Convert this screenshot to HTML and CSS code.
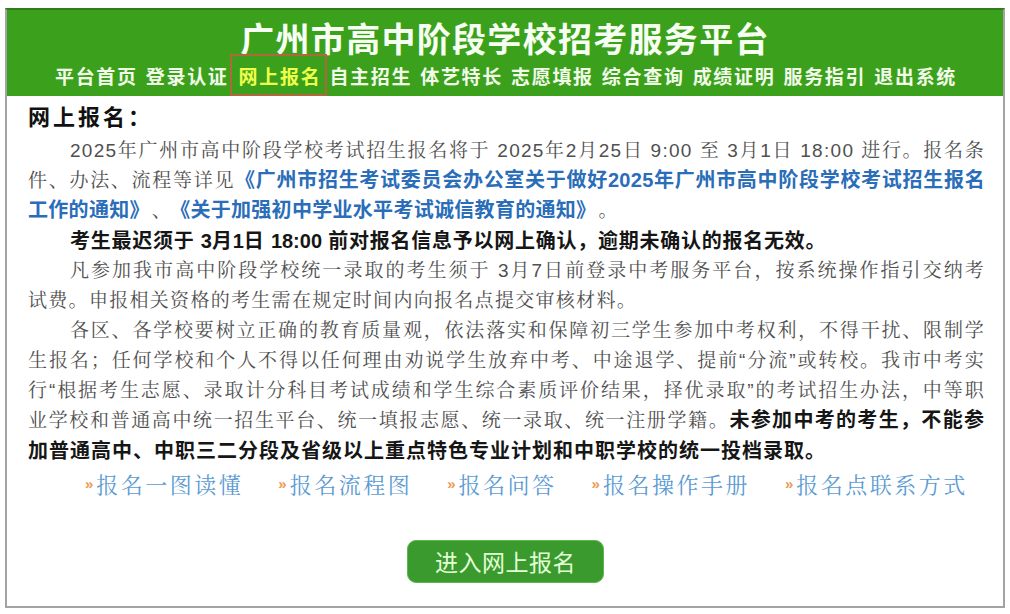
FILE: index.html
```html
<!DOCTYPE html>
<html lang="zh-CN">
<head>
<meta charset="utf-8">
<title>广州市高中阶段学校招考服务平台</title>
<link rel="stylesheet" href="styles.css">
</head>
<body>
<div class="frame">
  <header class="header">
    <h1 class="title">广州市高中阶段学校招考服务平台</h1>
    <nav class="nav">
      <a class="nav-item">平台首页</a>
      <a class="nav-item">登录认证</a>
      <a class="nav-item active">网上报名</a>
      <a class="nav-item">自主招生</a>
      <a class="nav-item">体艺特长</a>
      <a class="nav-item">志愿填报</a>
      <a class="nav-item">综合查询</a>
      <a class="nav-item">成绩证明</a>
      <a class="nav-item">服务指引</a>
      <a class="nav-item">退出系统</a>
    </nav>
  </header>
  <main class="content">
    <h2 class="heading">网上报名：</h2>
    <div class="para">
      <span class="ln first">2025年广州市高中阶段学校考试招生报名将于 2025年2月25日 9:00 至 3月1日 18:00 进行。报名条</span>
      <span class="ln">件、办法、流程等详见<a class="link">《广州市招生考试委员会办公室关于做好2025年广州市高中阶段学校考试招生报名</a></span>
      <span class="ln last"><a class="link">工作的通知》</a><span class="sep">、</span><a class="link">《关于加强初中学业水平考试诚信教育的通知》</a><span class="sep">。</span></span>
    </div>
    <div class="para">
      <span class="ln first last strong tight">考生最迟须于 <span class="num">3</span>月<span class="num">1</span>日 <span class="num">18:00</span> 前对报名信息予以网上确认，逾期未确认的报名无效。</span>
    </div>
    <div class="para">
      <span class="ln first">凡参加我市高中阶段学校统一录取的考生须于 3月7日前登录中考服务平台，按系统操作指引交纳考</span>
      <span class="ln last">试费。申报相关资格的考生需在规定时间内向报名点提交审核材料。</span>
    </div>
    <div class="para">
      <span class="ln first">各区、各学校要树立正确的教育质量观，依法落实和保障初三学生参加中考权利，不得干扰、限制学</span>
      <span class="ln">生报名；任何学校和个人不得以任何理由劝说学生放弃中考、中途退学、提前“分流”或转校。我市中考实</span>
      <span class="ln">行“根据考生志愿、录取计分科目考试成绩和学生综合素质评价结果，择优录取”的考试招生办法，中等职</span>
      <span class="ln">业学校和普通高中统一招生平台、统一填报志愿、统一录取、统一注册学籍。<b class="strong">未参加中考的考生，不能参</b></span>
      <span class="ln last strong">加普通高中、中职三二分段及省级以上重点特色专业计划和中职学校的统一投档录取。</span>
    </div>
    <div class="quick">
      <a class="quick-item"><span class="mark">»</span>报名一图读懂</a>
      <a class="quick-item"><span class="mark">»</span>报名流程图</a>
      <a class="quick-item"><span class="mark">»</span>报名问答</a>
      <a class="quick-item"><span class="mark">»</span>报名操作手册</a>
      <a class="quick-item"><span class="mark">»</span>报名点联系方式</a>
    </div>
    <div class="actions">
      <a class="btn">进入网上报名</a>
    </div>
  </main>
</div>
</body>
</html>
```

FILE: styles.css
```css
* { box-sizing: border-box; }
html, body { margin: 0; padding: 0; background: #ffffff; }
body {
  font-family: "Liberation Sans", "Noto Sans CJK SC", sans-serif;
}
.frame {
  width: 1000px;
  height: 600px;
  margin: 8px 0 0 5px;
  border: 2px solid #a3a3a3;
  border-top-color: #2f7d18;
  background: #ffffff;
}
.header {
  background: #3ba11d;
  height: 86px;
  padding-top: 8px;
  display: flex;
  flex-direction: column;
  align-items: center;
}
.title {
  margin: 0;
  height: 40px;
  line-height: 40px;
  font-size: 34px;
  letter-spacing: 1.3px;
  font-weight: 700;
  color: #f6fff2;
  font-family: "Noto Sans CJK SC", sans-serif;
}
.nav {
  margin-top: 6px;
  height: 24px;
  display: flex;
  align-items: center;
  justify-content: center;
  gap: 8px;
  padding-left: 2px;
}
.nav-item {
  font-family: "Noto Sans CJK SC", sans-serif;
  font-size: 19px;
  letter-spacing: 1.7px;
  font-weight: 700;
  line-height: 24px;
  color: #f2fbe8;
  white-space: nowrap;
}
.nav-item.active {
  color: #f0ff4a;
  border: 2px solid #b1673c;
  padding: 8px 4px 6px 7px;
  margin: -10px -6px -8px -7px;
}
.content {
  padding: 4px 18px 0 21px;
}
.heading {
  margin: 0 0 6px 0;
  font-family: "Noto Sans CJK SC", sans-serif;
  font-size: 22px;
  letter-spacing: 3px;
  line-height: 30px;
  font-weight: 700;
  color: #111111;
}
.para {
  font-family: "Liberation Sans", "Noto Serif CJK SC", "Noto Sans CJK SC", serif;
  font-size: 19px;
  letter-spacing: 1.3px;
  line-height: 30px;
  color: #505050;
}
.ln {
  display: block;
  height: 30px;
  white-space: nowrap;
  text-align: justify;
  text-align-last: justify;
}
.ln.first { padding-left: 42px; }
.ln.last { text-align-last: left; }
.strong {
  font-family: "Liberation Sans", "Noto Sans CJK SC", sans-serif;
  font-size: 20px;
  font-weight: 700;
  color: #161616;
  letter-spacing: 1.0px;
}
.tight { letter-spacing: 0.75px; }
b.strong { line-height: 20px; }
.num { letter-spacing: 0; }
.link {
  font-family: "Liberation Sans", "Noto Sans CJK SC", sans-serif;
  font-size: 20px;
  line-height: 20px;
  font-weight: 700;
  color: #2a6db8;
  letter-spacing: 0.3px;
}
.sep {
  margin: 0 8px 0 12px;
}
.quick {
  margin-top: 3px;
  display: flex;
  gap: 35px;
  padding-left: 57px;
  height: 30px;
  align-items: center;
}
.quick-item {
  font-family: "Noto Serif CJK SC", "Noto Sans CJK SC", serif;
  font-size: 22px;
  letter-spacing: 2.5px;
  line-height: 30px;
  color: #5b9bd2;
  white-space: nowrap;
  display: flex;
  align-items: center;
}
.mark {
  font-family: "Liberation Sans", sans-serif;
  font-size: 15px;
  font-weight: 700;
  color: #ec9a52;
  margin-right: 3px;
  letter-spacing: 0;
}
.actions {
  margin-top: 41px;
  display: flex;
  justify-content: center;
  margin-right: 2px;
}
.btn {
  width: 197px;
  height: 43px;
  border-radius: 9px;
  background: #3b9a2e;
  border: 1px solid #5cb84c;
  color: #e2ffd6;
  font-family: "Noto Sans CJK SC", sans-serif;
  font-size: 23px;
  line-height: 41px;
  text-align: center;
  letter-spacing: 0.5px;
}
```
